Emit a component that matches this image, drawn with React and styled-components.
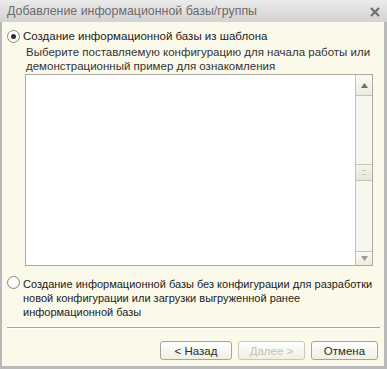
import React from "react";
import styled, { createGlobalStyle } from "styled-components";

const Global = createGlobalStyle`
  body {
    margin: 0;
    background: #ffffff;
    font-family: "Liberation Sans", Arial, sans-serif;
  }
`;

const Window = styled.div`
  width: 387px;
  height: 369px;
  box-sizing: border-box;
  display: flex;
  flex-direction: column;
  background: #b9b9b9;
  padding: 0 3px 3px 2px;
`;

const TitleBar = styled.div`
  height: 22px;
  flex: none;
  margin: 0 -3px 0 -2px;
  display: flex;
  align-items: center;
  justify-content: space-between;
  padding: 0 7px 0 7px;
  background: linear-gradient(#ebebeb, #d2d2d2);
  color: #6b6b6b;
  font-size: 12.4px;
`;

const Close = styled.svg`
  width: 10px;
  height: 10px;
  margin-top: 1px;
`;

const Content = styled.div`
  flex: 1;
  display: flex;
  flex-direction: column;
  background: #fbf9ea;
  color: #222;
  font-size: 11.5px;
  padding: 7px 0 0 0;
`;

const RadioRow = styled.label`
  display: flex;
  align-items: flex-start;
  padding-left: 5px;
  line-height: 14px;
  white-space: nowrap;
`;

const Circle = styled.span`
  flex: none;
  width: 11px;
  height: 11px;
  margin-top: ${(p) => p.$top}px;
  margin-right: 3px;
  border-radius: 50%;
  border: 1px solid #8a8a84;
  background: radial-gradient(circle at 40% 35%, #ffffff 40%, #e6e6de);
  display: flex;
  align-items: center;
  justify-content: center;
  &::after {
    content: "";
    display: ${(p) => (p.$checked ? "block" : "none")};
    width: 5px;
    height: 5px;
    border-radius: 50%;
    background: #2e2e2e;
  }
`;

const Description = styled.div`
  padding-left: 24px;
  margin-top: 2px;
  line-height: 14px;
  color: #333;
`;

const ListBox = styled.div`
  margin: 1px 0 0 23px;
  width: 348px;
  height: 192px;
  box-sizing: border-box;
  border: 1px solid #a9a99e;
  background: #ffffff;
  display: flex;
  justify-content: flex-end;
`;

const ScrollBar = styled.div`
  width: 16px;
  display: flex;
  flex-direction: column;
  border-left: 1px solid #c4c4b6;
  background: #f7f7f0;
`;

const ScrollButton = styled.div`
  height: ${(p) => p.$h}px;
  flex: none;
  display: flex;
  align-items: center;
  justify-content: center;
  background: linear-gradient(#fafaf4, #ebebe0);
  border-top: ${(p) => (p.$down ? "1px solid #c4c4b6" : "none")};
  border-bottom: ${(p) => (p.$down ? "none" : "1px solid #c4c4b6")};
`;

const Track = styled.div`
  flex: 1;
  display: flex;
  flex-direction: column;
  padding-top: 68px;
`;

const Thumb = styled.div`
  height: 15px;
  border-top: 1px solid #c4c4b6;
  border-bottom: 1px solid #c4c4b6;
  background: linear-gradient(#f4f4ea, #e6e6da);
  display: flex;
  align-items: center;
  justify-content: center;
  &::after {
    content: "";
    width: 4px;
    height: 3px;
    border-top: 1px solid #c8c8bc;
    border-bottom: 1px solid #c8c8bc;
  }
`;

const Second = styled(RadioRow)`
  margin-top: 11px;
  font-size: 11px;
`;

const Separator = styled.div`
  margin: 8px 4px 0 5px;
  height: 1px;
  background: #a9a893;
  border-bottom: 1px solid #ffffff;
`;

const Buttons = styled.div`
  display: flex;
  justify-content: flex-end;
  gap: 6px;
  margin-top: 12px;
  padding-right: 6px;
`;

const Button = styled.button`
  width: ${(p) => p.$w}px;
  height: 19px;
  padding: 0;
  border: 1px solid ${(p) => (p.disabled ? "#c9c8ba" : "#a5a59a")};
  border-radius: 3px;
  background: linear-gradient(#ffffff, #efefe4);
  font-family: "Liberation Sans", Arial, sans-serif;
  font-size: 11.5px;
  color: ${(p) => (p.disabled ? "#c3c2b2" : "#2a2a2a")};
`;

const Arrow = ({ up }) => (
  <svg width="7" height="5" viewBox="0 0 7 5">
    <path d={up ? "M3.5 0 L7 5 L0 5 Z" : "M0 0 L7 0 L3.5 5 Z"} fill={up ? "#6f6f66" : "#9a9a90"} />
  </svg>
);

export default function App() {
  return (
    <>
      <Global />
      <Window>
        <TitleBar>
          <span>Добавление информационной базы/группы</span>
          <Close viewBox="0 0 10 10">
            <path d="M1 1 L9 9 M9 1 L1 9" stroke="#6e6e6e" strokeWidth="2.2" />
          </Close>
        </TitleBar>
        <Content>
          <RadioRow>
            <Circle $checked $top={1} />
            <span>Создание информационной базы из шаблона</span>
          </RadioRow>
          <Description>
            Выберите поставляемую конфигурацию для начала работы или
            <br />
            демонстрационный пример для ознакомления
          </Description>
          <ListBox>
            <ScrollBar>
              <ScrollButton $h={20}>
                <Arrow up />
              </ScrollButton>
              <Track>
                <Thumb />
              </Track>
              <ScrollButton $h={13} $down>
                <Arrow />
              </ScrollButton>
            </ScrollBar>
          </ListBox>
          <Second>
            <Circle $top={-1} />
            <span>
              Создание информационной базы без конфигурации для разработки
              <br />
              новой конфигурации или загрузки выгруженной ранее
              <br />
              информационной базы
            </span>
          </Second>
          <Separator />
          <Buttons>
            <Button $w={72}>&lt; Назад</Button>
            <Button $w={67} disabled>
              Далее &gt;
            </Button>
            <Button $w={67}>Отмена</Button>
          </Buttons>
        </Content>
      </Window>
    </>
  );
}
